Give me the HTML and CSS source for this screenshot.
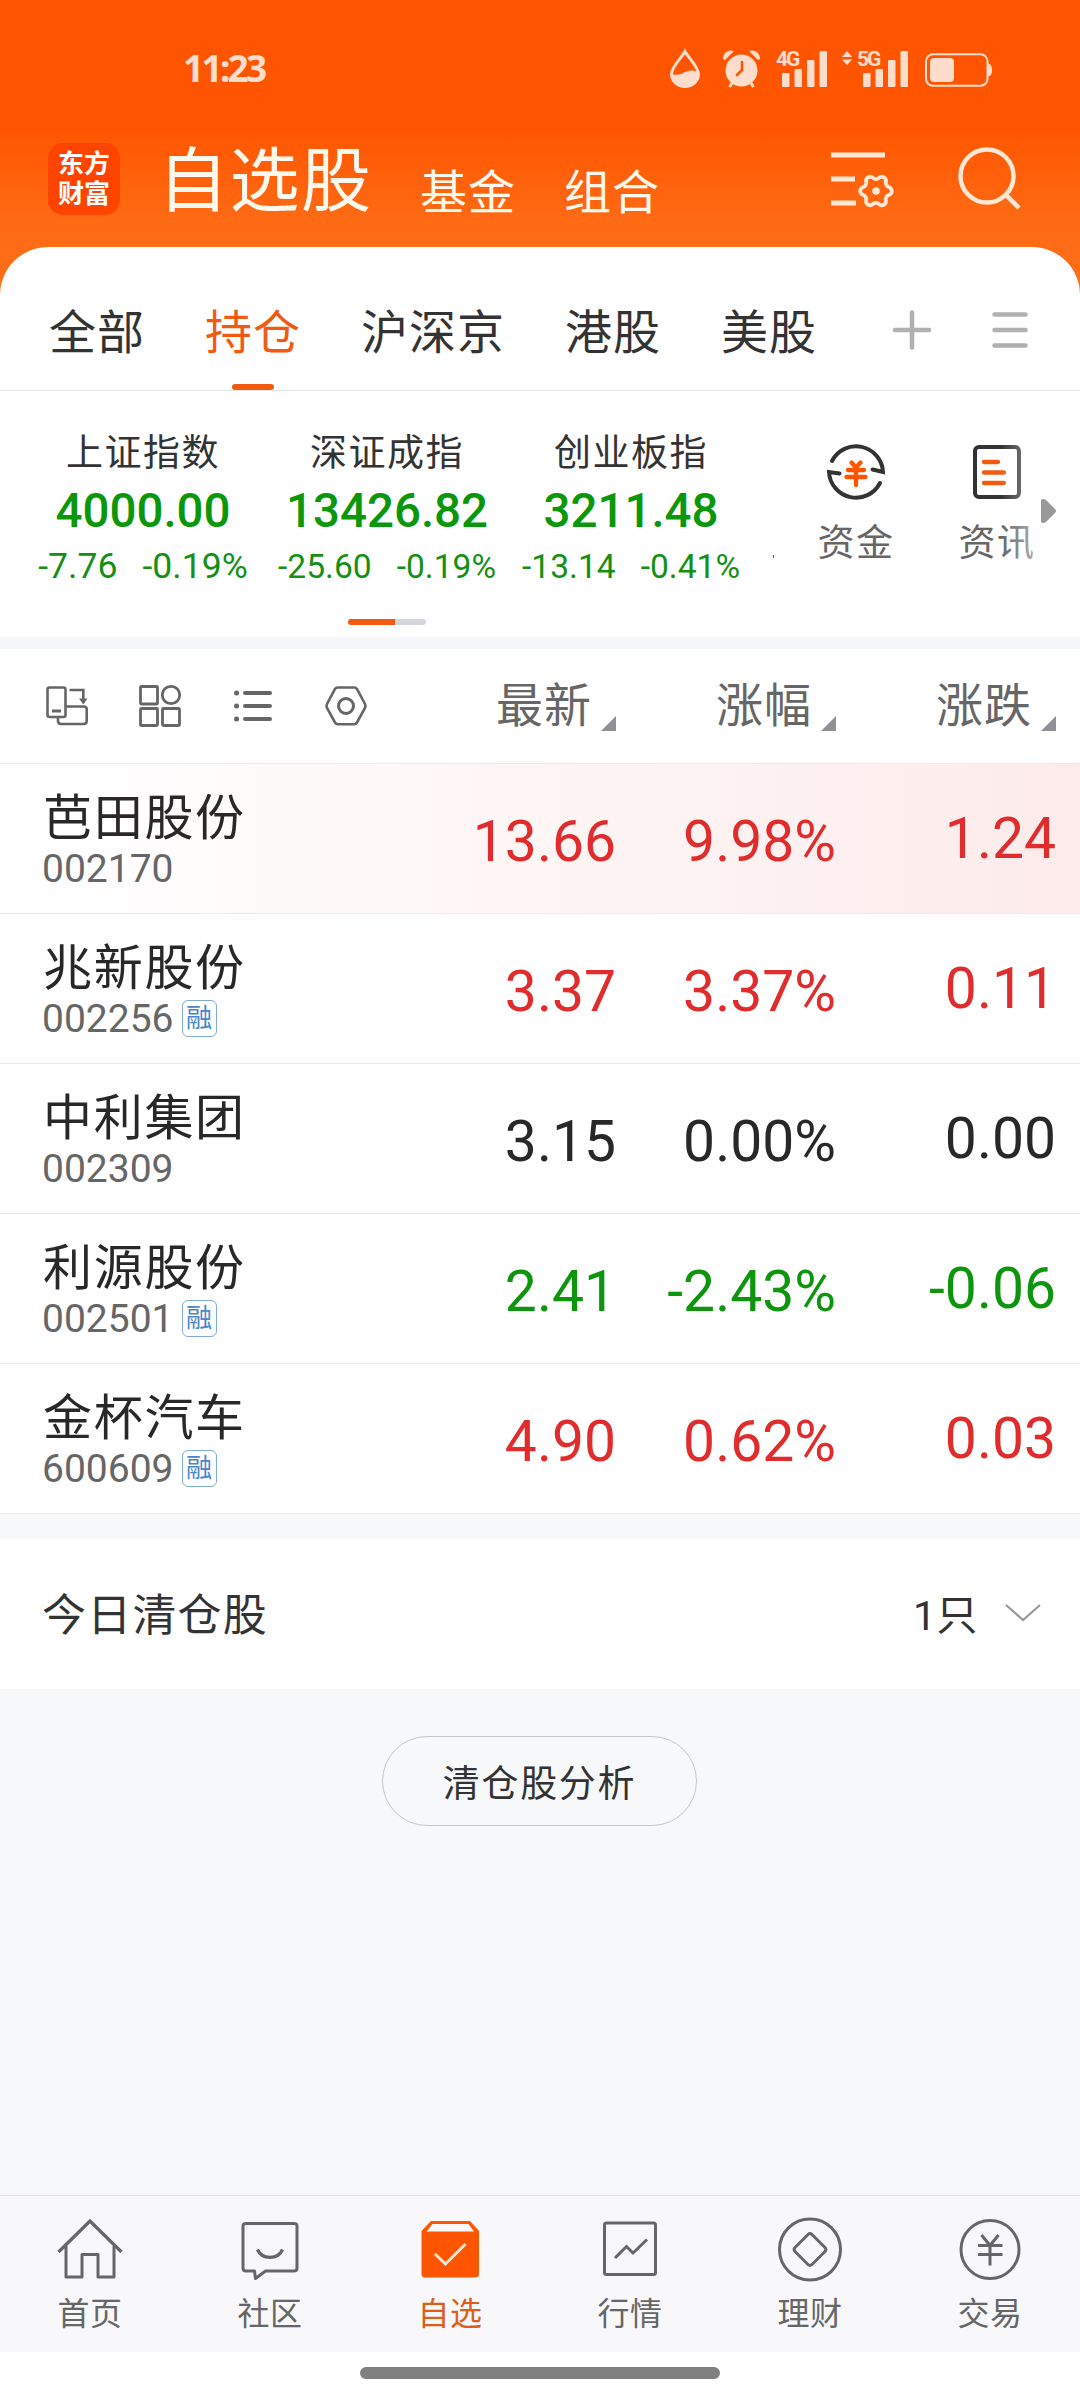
FILE: index.html
```html
<!DOCTYPE html>
<html lang="zh-CN">
<head>
    <meta charset="UTF-8">
    <title>自选股</title>
    <link rel="stylesheet" href="styles.css">
</head>
<body>
    <header class="header">
        <div class="status-bar">
            <span class="time">11:23</span>
            <div class="status-icons">
                <svg class="drop" width="30" height="38" viewBox="0 0 30 38">
                    <path d="M15 1.500 C12 7 1.500 17 1.500 24 A13.500 12.500 0 0 0 28.500 24 C28.500 17 18 7 15 1.500Z" fill="none" stroke="#ffddcc" stroke-width="3"/>
                    <path d="M2 24 C8 26 11 24 15 22 C20 20 23 20 28 22 C29 31 23 36.500 15 36.500 C7 36.500 2 31 2 24Z" fill="#ffddcc"/>
                </svg>
                <svg class="alarm" width="37" height="38" viewBox="0 0 37 38">
                    <circle cx="18.500" cy="20.500" r="16" fill="#ffddcc"/>
                    <path d="M0 9 C0 3 5 -1 11 1 L2 10Z M37 9 C37 3 32 -1 26 1 L35 10Z" fill="#ffddcc"/>
                    <path d="M9 33 L6.500 37 M28 33 L30.500 37" stroke="#ffddcc" stroke-width="3"/>
                    <path d="M19 12 V20 L14 25" fill="none" stroke="#ff5500" stroke-width="2.600" stroke-linecap="round"/>
                </svg>
                <svg class="signal" width="51" height="38" viewBox="0 0 51 38" fill="#ffddcc">
                    <text x="0" y="16" class="net">4G</text>
                    <rect x="6" y="23" width="7.500" height="14" rx="1"/>
                    <rect x="18.500" y="19" width="7.500" height="18" rx="1"/>
                    <rect x="31" y="10" width="7.500" height="27" rx="1"/>
                    <rect x="43.500" y="1" width="7.500" height="36" rx="1"/>
                </svg>
                <svg class="signal-5g" width="66" height="38" viewBox="0 0 66 38" fill="#ffddcc">
                    <path d="M5 1 L10 7 H0Z M5 15 L10 9.500 H0Z"/>
                    <text x="15" y="16" class="net">5G</text>
                    <rect x="21" y="23" width="7.500" height="14" rx="1"/>
                    <rect x="33.500" y="19" width="7.500" height="18" rx="1"/>
                    <rect x="46" y="10" width="7.500" height="27" rx="1"/>
                    <rect x="58.500" y="1" width="7.500" height="36" rx="1"/>
                </svg>
                <svg width="67" height="38" viewBox="0 0 67 38">
                    <rect x="1" y="4.300" width="61.500" height="31.500" rx="7" fill="none" stroke="#ffddcc" stroke-width="2"/>
                    <rect x="5" y="8" width="24" height="24" rx="4" fill="#ffddcc"/>
                    <path d="M63 13.500 Q67 14 67 20 Q67 26 63 26.500Z" fill="#ffddcc"/>
                </svg>
            </div>
        </div>
        <div class="title-bar">
            <div class="logo"><span>东方</span><span>财富</span></div>
            <h1>自选股</h1>
            <span class="sub-title">基金</span>
            <span class="sub-title">组合</span>
            <div class="title-icons">
                <svg width="64" height="64" viewBox="0 0 64 64" fill="none" stroke="#ffe9d6">
                    <path d="M0 8 H54 M0 32 H24 M0 56 H25" stroke-width="5"/>
                    <path transform="translate(45 44)" stroke-width="3.800" d="M13.500 -3.600 A4 4 0 0 1 13.500 3.600 A5 5 0 0 0 9.900 9.900 A4 4 0 0 1 3.600 13.500 A5 5 0 0 0 -3.600 13.500 A4 4 0 0 1 -9.900 9.900 A5 5 0 0 0 -13.500 3.600 A4 4 0 0 1 -13.500 -3.600 A5 5 0 0 0 -9.900 -9.900 A4 4 0 0 1 -3.600 -13.500 A5 5 0 0 0 3.600 -13.500 A4 4 0 0 1 9.900 -9.900 A5 5 0 0 0 13.500 -3.600Z"/>
                    <circle cx="45" cy="44" r="3.800" fill="#ffe9d6" stroke="none"/>
                </svg>
                <svg width="64" height="64" viewBox="0 0 64 64" fill="none" stroke="#ffe9d6" stroke-width="4.500">
                    <circle cx="29" cy="29" r="26.500"/>
                    <path d="M48 48 L61 61"/>
                </svg>
            </div>
        </div>
    </header>

    <main>
        <nav class="tabs">
            <span>全部</span>
            <span class="active">持仓</span>
            <span>沪深京</span>
            <span>港股</span>
            <span>美股</span>
            <svg class="plus" width="40" height="40" viewBox="0 0 40 40" stroke="#b0b0b0" stroke-width="4.500" stroke-linecap="round">
                <path d="M20 2.500 V37.500 M3 20 H37"/>
            </svg>
            <svg class="menu" width="36" height="40" viewBox="0 0 36 40" stroke="#b0b0b0" stroke-width="4.500" stroke-linecap="round">
                <path d="M2.500 4.500 H33.500 M2.500 20 H33.500 M2.500 35.500 H33.500"/>
            </svg>
        </nav>

        <section class="indexes">
            <div class="index">
                <h3>上证指数</h3>
                <strong>4000.00</strong>
                <p class="wide"><span>-7.76</span><span>-0.19%</span></p>
            </div>
            <div class="index">
                <h3>深证成指</h3>
                <strong>13426.82</strong>
                <p><span>-25.60</span><span>-0.19%</span></p>
            </div>
            <div class="index">
                <h3>创业板指</h3>
                <strong>3211.48</strong>
                <p><span>-13.14</span><span>-0.41%</span></p>
            </div>
            <i class="next-index"></i>
            <div class="links">
                <div class="link">
                    <svg width="60" height="60" viewBox="0 0 60 60" fill="none" stroke="#333" stroke-width="4" stroke-linecap="round">
                        <path d="M6 19 A27 27 0 0 1 57 30 L46.500 27.500 M54 41 A27 27 0 0 1 3 30 L13.500 31.500"/>
                        <path d="M25.500 20.500 L30 25.500 L34.500 20.500 M22 28 H38 M20.500 35 H39.500 M30 26 V43" stroke="#ff5500" stroke-width="4.300"/>
                    </svg>
                    <span>资金</span>
                </div>
                <div class="link news">
                    <svg width="60" height="60" viewBox="0 0 60 60" fill="none" stroke="#333" stroke-width="4" stroke-linecap="round">
                        <rect x="8" y="5" width="44" height="50" rx="4"/>
                        <path d="M17 20 H31 M17 30.500 H37 M17 41 H37" stroke="#f25a12" stroke-width="4.300"/>
                    </svg>
                    <span>资讯</span>
                </div>
            </div>
            <svg class="more" width="15" height="26" viewBox="0 0 15 26">
                <path d="M0 2 Q2 0 5 2 L14 11 Q16 13 14 15 L5 24 Q2 26 0 24Z" fill="#999"/>
            </svg>
        </section>
        <div class="pager"><i></i></div>

        <section class="stocks">
            <div class="row head">
                <div class="tools">
                    <svg width="42" height="42" viewBox="0 0 42 42" fill="none" stroke="#666" stroke-width="2.600">
                        <rect x="1.500" y="2.500" width="18" height="29.500" rx="2"/>
                        <path d="M6 26 H15" stroke-width="3"/>
                        <path d="M23.500 5 H37.300 V15"/>
                        <path d="M33 13.500 H41.500 L37.300 19.500Z" fill="#666" stroke="none"/>
                        <path d="M20 21.500 H37.500 Q40.700 21.500 40.700 24 V36 Q40.700 39 37.500 39 H15 Q12 39 12 36 V32"/>
                    </svg>
                    <svg width="42" height="42" viewBox="0 0 42 42" fill="none" stroke="#666" stroke-width="2.800">
                        <rect x="1.500" y="1.500" width="17" height="17.500" rx="1"/>
                        <circle cx="32" cy="10" r="8.700"/>
                        <rect x="1.500" y="23.500" width="17" height="17" rx="1"/>
                        <rect x="23.500" y="23.500" width="17" height="17" rx="1"/>
                    </svg>
                    <svg width="42" height="42" viewBox="0 0 42 42" stroke="#666" stroke-width="4" stroke-linecap="round">
                        <path d="M13 8 H38 M13 21 H38 M13 34 H38"/>
                        <path d="M4.500 8 H4.600 M4.500 21 H4.600 M4.500 34 H4.600" stroke-width="5"/>
                    </svg>
                    <svg width="42" height="42" viewBox="0 0 42 42" fill="none" stroke="#666" stroke-width="2.600">
                        <path d="M12.500 2.500 H29.500 Q31 2.500 32 4 L40 19 Q41 21 40 23 L32 37.500 Q31 39.300 29.500 39.300 H12.500 Q11 39.300 10 37.500 L2 23 Q1 21 2 19 L10 4 Q11 2.500 12.500 2.500Z"/>
                        <circle cx="21" cy="21" r="7.500" stroke-width="3"/>
                    </svg>
                </div>
                <span class="sort">最新</span>
                <span class="sort">涨幅</span>
                <span class="sort">涨跌</span>
            </div>
            <div class="row up hot">
                <div class="stock"><b>芭田股份</b><small>002170</small></div>
                <span>13.66</span><span>9.98%</span><span class="diff">1.24</span>
            </div>
            <div class="row up">
                <div class="stock"><b>兆新股份</b><small>002256<em>融</em></small></div>
                <span>3.37</span><span>3.37%</span><span class="diff">0.11</span>
            </div>
            <div class="row">
                <div class="stock"><b>中利集团</b><small>002309</small></div>
                <span>3.15</span><span>0.00%</span><span class="diff">0.00</span>
            </div>
            <div class="row down">
                <div class="stock"><b>利源股份</b><small>002501<em>融</em></small></div>
                <span>2.41</span><span>-2.43%</span><span class="diff">-0.06</span>
            </div>
            <div class="row up">
                <div class="stock"><b>金杯汽车</b><small>600609<em>融</em></small></div>
                <span>4.90</span><span>0.62%</span><span class="diff">0.03</span>
            </div>
        </section>

        <section class="cleared">
            <span class="cleared-title">今日清仓股</span>
            <span class="count">1只</span>
            <svg width="36" height="20" viewBox="0 0 36 20" fill="none" stroke="#999" stroke-width="2.200">
                <path d="M1 2 L18 17 L35 2"/>
            </svg>
        </section>
        <button class="analysis">清仓股分析</button>
    </main>

    <footer class="nav">
        <div class="nav-item">
            <svg width="66" height="66" viewBox="0 0 66 66" fill="none" stroke="#666" stroke-width="3">
                <path d="M1.500 35 L33 4 L64.500 35" stroke-width="3.300"/>
                <path d="M9 29 V60 H25 V37.500 H41 V60 H57 V29" stroke-linejoin="round"/>
            </svg>
            <span>首页</span>
        </div>
        <div class="nav-item">
            <svg width="66" height="66" viewBox="0 0 66 66" fill="none" stroke="#666" stroke-width="3" stroke-linejoin="round">
                <path d="M9 6.500 H57 Q60 6.500 60 9 V51 Q60 54 57 54 H28.500 L18.500 61.500 L17.500 54 H9 Q6 54 6 51 V9 Q6 6.500 9 6.500Z"/>
                <path d="M20.500 32.500 C25 43 41 43 45.500 32.500" stroke-width="3.300"/>
            </svg>
            <span>社区</span>
        </div>
        <div class="nav-item current">
            <svg width="66" height="66" viewBox="0 0 66 66" fill="none">
                <path d="M14 4 H53 L62 14 V57 Q62 60.500 58 60.500 H8 Q4.500 60.500 4.500 57 V14Z" fill="#ff5500"/>
                <path d="M15.500 7 H51.500 L57 14.500 H9.500Z" fill="#f9f9fb"/>
                <path d="M18 37 L28.500 47 L48.500 27" stroke="#ffe9d6" stroke-width="3"/>
            </svg>
            <span>自选</span>
        </div>
        <div class="nav-item">
            <svg width="66" height="66" viewBox="0 0 66 66" fill="none" stroke="#666" stroke-width="3">
                <rect x="7.500" y="6" width="51" height="51.500" rx="2"/>
                <path d="M18 41 L29.500 29.500 L36 36 L50 22.500"/>
            </svg>
            <span>行情</span>
        </div>
        <div class="nav-item">
            <svg width="66" height="66" viewBox="0 0 66 66" fill="none" stroke="#666" stroke-width="3">
                <circle cx="33" cy="32.500" r="30.500"/>
                <path d="M31 17.500 Q33 15.500 35 17.500 L48 30.500 Q50 32.500 48 34.500 L35 47.500 Q33 49.500 31 47.500 L18 34.500 Q16 32.500 18 30.500Z"/>
            </svg>
            <span>理财</span>
        </div>
        <div class="nav-item">
            <svg width="66" height="66" viewBox="0 0 66 66" fill="none" stroke="#666" stroke-width="3">
                <circle cx="33" cy="32.500" r="29"/>
                <path d="M24.500 18 L33 28.500 L41.500 18 M21 28.500 H45.500 M21 37.500 H45.500 M33 28 V48.500"/>
            </svg>
            <span>交易</span>
        </div>
    </footer>
    <div class="home-bar"><i></i></div>
</body>
</html>
```

FILE: styles.css
```css
* {
    box-sizing: border-box;
}
body {
    margin: 0;
    width: 1080px;
    height: 2400px;
    display: flex;
    flex-direction: column;
    background: #f7f8fa;
    color: #333;
    font-family: Roboto, "Noto Sans CJK SC", sans-serif;
    overflow: hidden;
}
svg {
    display: block;
    flex-shrink: 0;
    overflow: visible;
}
h1, h3, p {
    margin: 0;
    font-weight: 400;
}

/* header */
.header {
    height: 310px;
    flex-shrink: 0;
    background: linear-gradient(#ff5500 0, #ff5500 125px, #ff6a14 220px, #ff7119 300px);
}
.status-bar {
    height: 137px;
    display: flex;
    justify-content: space-between;
    padding: 0 88px 0 183px;
}
.time {
    margin-top: 48px;
    font: 700 37px/40px "Noto Sans", sans-serif;
    letter-spacing: -2.700px;
    color: #ffddcc;
}
.status-icons {
    display: flex;
    margin-top: 50px;
}
.drop {
    margin-right: 23px;
}
.alarm {
    margin-right: 16px;
}
.signal {
    margin-right: 15px;
}
.signal-5g {
    margin-right: 17px;
}
.net {
    font: 700 21px/20px Roboto, sans-serif;
    letter-spacing: -2px;
}
.title-bar {
    display: flex;
    height: 110px;
    padding: 0 58px 0 48px;
    color: #fff8ec;
}
.logo {
    width: 72px;
    height: 72px;
    margin-top: 6px;
    padding-top: 6px;
    border-radius: 15px;
    background: #ff4400;
    display: flex;
    flex-direction: column;
    align-items: center;
    font: 700 26px/30px Roboto, "Noto Sans CJK SC", sans-serif;
    color: #fff;
}
h1 {
    margin-left: 38px;
    width: 219px;
    font-size: 70px;
    line-height: 90px;
    letter-spacing: 1.500px;
    white-space: nowrap;
}
.sub-title {
    margin-left: 43px;
    width: 101px;
    font-size: 47px;
    line-height: 112px;
    letter-spacing: 1px;
}
.title-icons {
    display: flex;
    gap: 63px;
    margin: 10px 0 0 auto;
}

/* tabs */
main {
    display: flex;
    flex-direction: column;
    margin-top: -63px;
}
.tabs {
    height: 144px;
    display: flex;
    align-items: center;
    gap: 60px;
    padding: 28px 54px 0 49px;
    background: #fff;
    border-radius: 48px 48px 0 0;
    border-bottom: 1px solid #e4e4e4;
    font-size: 47px;
    line-height: 115px;
    letter-spacing: 1px;
    white-space: nowrap;
}
.tabs .active {
    position: relative;
    color: #f25a12;
}
.tabs .active::after {
    content: "";
    position: absolute;
    left: 27px;
    bottom: 0;
    width: 42px;
    height: 6px;
    border-radius: 3px;
    background: #f25a12;
}
.plus {
    margin: -5px 0 0 15px;
}
.menu {
    margin: -5px 0 0 auto;
}

/* indexes */
.indexes {
    height: 228px;
    display: flex;
    padding-left: 21px;
    background: #fff;
}
.index {
    width: 244px;
    padding-top: 37px;
    text-align: center;
    white-space: nowrap;
}
.index h3 {
    font-size: 37px;
    line-height: 52px;
    letter-spacing: 1.500px;
}
.index strong {
    display: block;
    font-weight: 500;
    font-size: 47.500px;
    line-height: 62px;
    color: #0a980a;
}
.index p {
    display: flex;
    justify-content: center;
    gap: 25px;
    font-size: 33.600px;
    line-height: 49px;
    color: #149014;
}
.index p.wide {
    font-size: 35.600px;
}
.next-index {
    width: 1px;
    height: 3px;
    margin: 164px 0 0 20px;
    background: #e03030;
}
.links {
    display: flex;
    width: 282px;
    margin: 51px 0 0 11px;
}
.link {
    width: 141px;
    display: flex;
    flex-direction: column;
    align-items: center;
    font-size: 37px;
    line-height: 42px;
    letter-spacing: 1.500px;
    color: #666;
}
.link span {
    margin: 21px 0 0 1px;
}
.news {
    position: relative;
}
.news::after {
    content: "";
    position: absolute;
    right: 30px;
    top: 0;
    width: 36px;
    height: 126px;
    background: linear-gradient(90deg, rgba(255,255,255,0), rgba(255,255,255,0.5));
}
.more {
    margin: 107px 0 0 -26px;
}
.pager {
    height: 30px;
    padding-left: 348px;
    background: #fff;
    border-bottom: 12px solid #f6f7f9;
}
.pager i {
    display: block;
    width: 78px;
    height: 6px;
    border-radius: 3px;
    background: linear-gradient(90deg, #f25a12 47px, #d3d6db 47px);
}

/* stock list */
.row {
    height: 150px;
    display: grid;
    grid-template-columns: 1fr 220px 220px 220px;
    align-items: center;
    padding: 0 24px 0 43px;
    background: #fff;
    border-bottom: 1px solid #ebebeb;
    font-size: 57px;
    line-height: 70px;
    text-align: right;
    color: #282828;
}
.row.head {
    height: 115px;
    padding-left: 46px;
    font-size: 47px;
    color: #666;
}
.tools {
    display: flex;
    gap: 51px;
}
.sort {
    display: flex;
    justify-content: flex-end;
    align-items: flex-end;
    letter-spacing: 1px;
}
.sort::after {
    content: "";
    margin: 0 0 10px 9px;
    border-left: 15px solid transparent;
    border-bottom: 15px solid #909096;
}
.row.up {
    color: #e02c2c;
}
.row.down {
    color: #0d960d;
}
.row.hot {
    background: linear-gradient(90deg, #fff, #fdebeb);
}
.row:not(.head) > span {
    padding-top: 6px;
}
.row > .diff.diff {
    padding-top: 0;
}
.stock {
    text-align: left;
    color: #282828;
}
.stock b {
    display: block;
    font-weight: 400;
    font-size: 49px;
    line-height: 60px;
    letter-spacing: 1.700px;
}
.stock small {
    display: flex;
    align-items: center;
    margin-left: -1px;
    font-size: 39px;
    line-height: 40px;
    color: #666;
}
.stock em {
    width: 35px;
    height: 37px;
    margin-left: 8px;
    border: 1.500px solid #7fa9d6;
    border-radius: 6px;
    font-style: normal;
    font-size: 26px;
    line-height: 35px;
    text-align: center;
    color: #4a86c8;
}

/* cleared */
.cleared {
    height: 150px;
    margin-top: 25px;
    padding: 0 39px 2px 42px;
    display: flex;
    align-items: center;
    background: #fff;
}
.cleared-title {
    padding-bottom: 2px;
    font-size: 44px;
    letter-spacing: 1.200px;
}
.count {
    margin: 0 27px 0 auto;
    padding-bottom: 2px;
    font-size: 41px;
    letter-spacing: 0.500px;
}
.analysis {
    align-self: center;
    width: 315px;
    height: 90px;
    margin: 47px 1px 0 0;
    padding: 0;
    border: 1px solid #c4c6ca;
    border-radius: 45px;
    background: none;
    color: #333;
    font: 37px Roboto, "Noto Sans CJK SC", sans-serif;
    letter-spacing: 1.700px;
}

/* bottom nav */
.nav {
    height: 157px;
    flex-shrink: 0;
    margin-top: auto;
    display: flex;
    background: #f8f8fa;
    border-top: 1px solid #e0e2e4;
}
.nav-item {
    width: 180px;
    padding-top: 21px;
    display: flex;
    flex-direction: column;
    align-items: center;
    font-size: 32px;
    line-height: 40px;
    letter-spacing: 0.500px;
    color: #666;
}
.nav-item span {
    margin-top: 11px;
}
.nav-item.current {
    color: #dd5d1c;
}
.home-bar {
    height: 48px;
    flex-shrink: 0;
    padding-top: 15px;
    background: #fff;
}
.home-bar i {
    display: block;
    width: 360px;
    height: 12px;
    margin: 0 auto;
    border-radius: 6px;
    background: #808080;
}
```
